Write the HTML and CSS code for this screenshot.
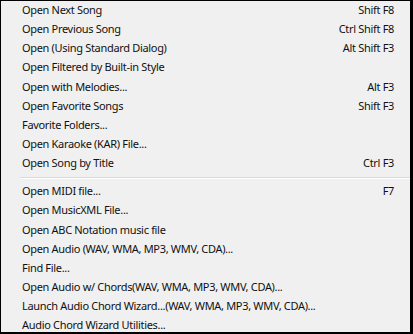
FILE: index.html
```html
<!DOCTYPE html>
<html>
<head>
	<meta charset="utf-8" />
	<title>Open menu</title>
	<link rel="stylesheet" href="styles.css">
</head>
<body>
	<div class="menu">
		<div class="item"><span>Open Next Song</span><span class="key">Shift F8</span></div>
		<div class="item"><span>Open Previous Song</span><span class="key">Ctrl Shift F8</span></div>
		<div class="item"><span>Open (Using Standard Dialog)</span><span class="key">Alt Shift F3</span></div>
		<div class="item"><span>Open Filtered by Built-in Style</span></div>
		<div class="item"><span>Open with Melodies...</span><span class="key">Alt F3</span></div>
		<div class="item"><span>Open Favorite Songs</span><span class="key">Shift F3</span></div>
		<div class="item"><span>Favorite Folders...</span></div>
		<div class="item"><span>Open Karaoke (KAR) File...</span></div>
		<div class="item"><span>Open Song by Title</span><span class="key">Ctrl F3</span></div>
		<div class="sep"></div>
		<div class="item"><span>Open MIDI file...</span><span class="key">F7</span></div>
		<div class="item"><span>Open MusicXML File...</span></div>
		<div class="item"><span>Open ABC Notation music file</span></div>
		<div class="item"><span>Open Audio (WAV, WMA, MP3, WMV, CDA)...</span></div>
		<div class="item"><span>Find File...</span></div>
		<div class="item"><span>Open Audio w/ Chords(WAV, WMA, MP3, WMV, CDA)...</span></div>
		<div class="item"><span>Launch Audio Chord Wizard...(WAV, WMA, MP3, WMV, CDA)...</span></div>
		<div class="item"><span>Audio Chord Wizard Utilities...</span></div>
	</div>
</body>
</html>
```

FILE: styles.css
```css
* { margin:0; padding:0; box-sizing:border-box; }
body { width:413px; height:334px; background:#f0f0f0; overflow:hidden; }
.menu { width:413px; height:334px; background:#f0f0f0; border:solid #000; border-width:1px 3px 2px 1px; font-family:"Noto Sans", sans-serif; font-size:11px; letter-spacing:-0.32px; color:#111; }
.item { display:flex; justify-content:space-between; height:19.15px; line-height:18px; padding:0 16px 0 21px; white-space:nowrap; }
.sep { height:9px; margin:0 0 0 19px; display:flex; align-items:center; }
.sep:before { content:""; display:block; width:100%; height:1px; background:#d9d9d9; border-bottom:1px solid #fff; box-sizing:content-box; }
```
